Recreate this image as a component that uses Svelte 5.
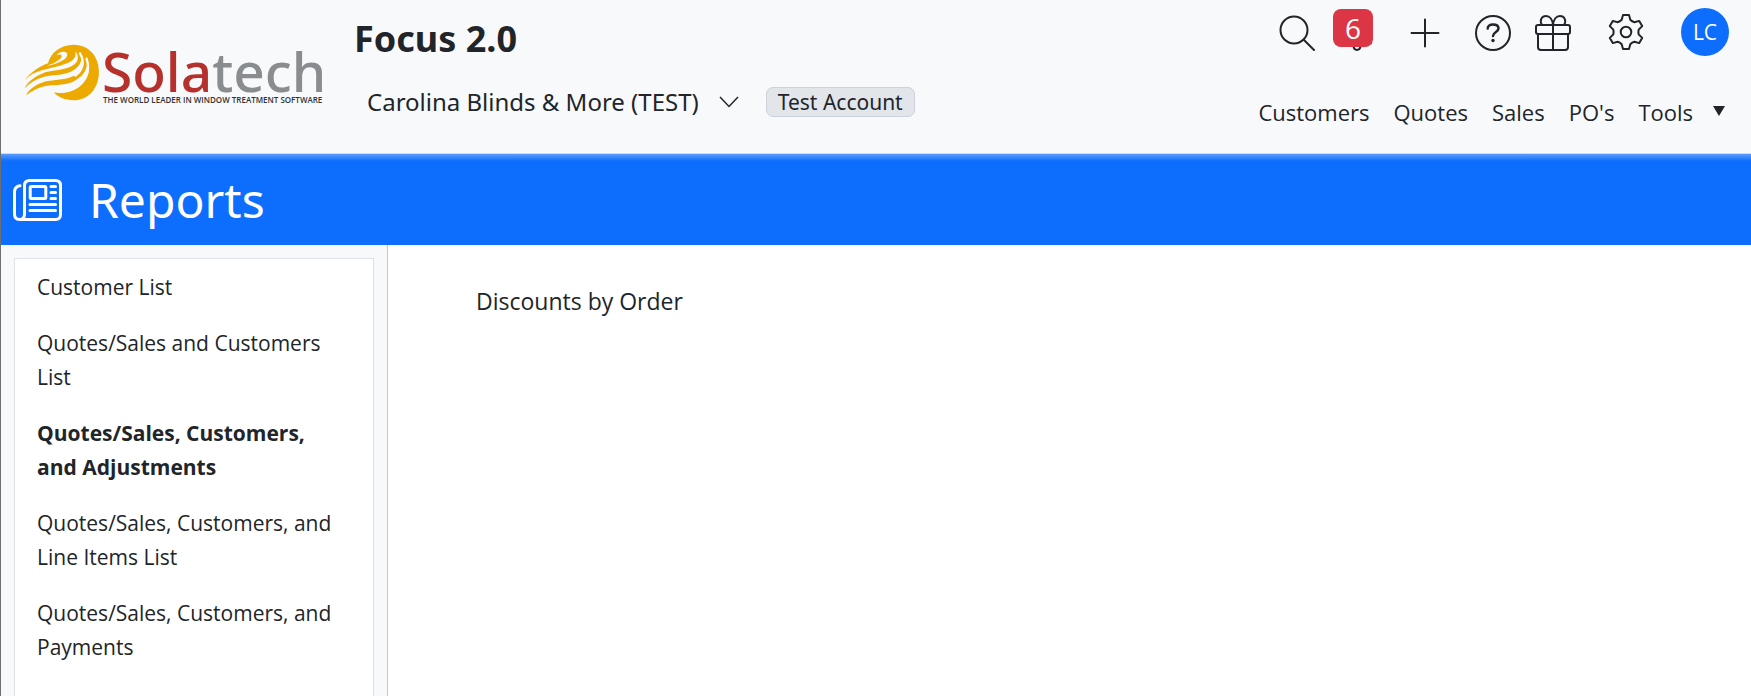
<script>
    const company = "Carolina Blinds & More (TEST)";
    const menu = ["Customers", "Quotes", "Sales", "PO's"];
    const reports = [
        "Customer List",
        "Quotes/Sales and Customers List",
        "Quotes/Sales, Customers, and Adjustments",
        "Quotes/Sales, Customers, and Line Items List",
        "Quotes/Sales, Customers, and Payments"
    ];

    let notifications = 6;
    let activeReport = 2;
</script>

<div class="page">
    <header>
        <a class="logo" href="#home" aria-label="Solatech home">
            <svg viewBox="0 -24 304 96" width="304" height="96">
                <g transform="translate(-3 -2) scale(0.333)">
                    <path fill="#ecaa00" d="M8 115C25 92 50 74 78 64C85 33 115 8 155 8C200 8 231 42 231 90C231 138 200 175 155 175C128 175 108 165 95 152C120 156 152 152 175 132C197 113 208 85 196 52C198 85 182 106 152 120C122 132 92 127 68 133C45 138 28 148 12 161C22 140 42 127 72 118C105 112 137 114 160 99C182 84 190 60 176 34C184 60 170 78 145 90C115 102 90 97 64 105C40 112 22 124 8 139C16 120 40 102 70 91C100 83 130 84 150 72C170 60 173 44 160 28C164 44 155 56 135 64C105 76 85 78 60 85C38 91 20 101 8 115Z" />
                    <path fill="#f8f9fb" d="M74 72C98 63 120 52 119 42C117 36 110 37 104 40C110 28 132 25 136 35C139 50 112 64 74 72Z" />
                    <path fill="none" stroke="#f8f9fb" stroke-width="7" stroke-linecap="round" d="M174 34C190 60 182 84 160 101M194 50C205 85 194 112 168 132" />
                </g>
                <text class="name" x="77" y="48"><tspan fill="#b6302c">Sola</tspan><tspan fill="#8a8d90">tech</tspan></text>
                <text class="tagline" x="78" y="59">THE WORLD LEADER IN WINDOW TREATMENT SOFTWARE</text>
            </svg>
        </a>

        <div class="account">
            <h1>Focus 2.0</h1>
            <div class="company">
                <button class="picker">
                    {company}
                    <svg class="chevron" viewBox="0 0 20 12" width="20" height="12"><path d="M1 1L10 10.500L19 1" /></svg>
                </button>
                <span class="tag">Test Account</span>
            </div>
        </div>

        <div class="tools">
            <div class="icons">
                <div class="pair">
                    <button aria-label="Search">
                        <svg viewBox="0 0 36 36"><circle cx="15" cy="15" r="13.500" /><path d="M24.500 24.500L35 35" /></svg>
                    </button>
                    <button class="bell" aria-label="Notifications">
                        <svg viewBox="0 0 36 36"><path d="M18 3C11 4 9.500 9 9.500 14C9.500 21 7 26 4 28H32C29 26 26.500 21 26.500 14C26.500 9 25 4 18 3ZM14.500 31.500C15 36 21 36 21.500 31.500" /></svg>
                        <span class="badge">{notifications}</span>
                    </button>
                </div>
                <button aria-label="Add">
                    <svg viewBox="0 0 36 36"><path d="M18 4.500V31.500M4.500 18H31.500" /></svg>
                </button>
                <div class="pair">
                    <button aria-label="Help">
                        <svg viewBox="0 0 36 36"><circle cx="18" cy="18" r="17" /><path class="mark" d="M12.700 13.500C12.700 11 15 9.500 18 9.500C21.200 9.500 23.500 11 23.500 13.600C23.500 17 18 17 18 21" /><circle class="dot" cx="18" cy="25.500" r="1.700" /></svg>
                    </button>
                    <button aria-label="What's new">
                        <svg viewBox="0 0 36 36"><rect x="1" y="10" width="34" height="9" rx="2" /><path d="M3 19V32Q3 35 6 35H30Q33 35 33 32V19M18 10V35M7 10C4 5 7 1 11 1C15 1 17.500 5 18 10C18.500 5 21 1 25 1C29 1 32 5 29 10" /></svg>
                    </button>
                </div>
            </div>
            <button aria-label="Settings">
                <svg viewBox="0 0 36 36"><circle cx="18" cy="18" r="5.300" /><path d="M15 1H21L22.300 5.800Q24 7.600 26.400 8.200L31.200 6.900L34.200 12.100L30.700 15.600Q30 18 30.700 20.400L34.200 23.900L31.200 29.100L26.400 27.800Q24 28.400 22.300 30.200L21 35H15L13.700 30.200Q12 28.400 9.600 27.800L4.800 29.100L1.800 23.900L5.300 20.400Q6 18 5.300 15.600L1.800 12.100L4.800 6.900L9.600 8.200Q12 7.600 13.700 5.800Z" /></svg>
            </button>
            <button class="avatar" aria-label="Account LC">LC</button>

            <nav>
                {#each menu as item}
                    <a href="#{item.replace(/\W/g, '').toLowerCase()}">{item}</a>
                {/each}
                <a class="dropdown" href="#tools">
                    Tools
                    <svg viewBox="0 0 12 10" width="12" height="10"><path d="M0 0h12L6 10z" /></svg>
                </a>
            </nav>
        </div>
    </header>

    <div class="banner">
        <svg viewBox="0 0 49 42" width="49" height="42">
            <path d="M6.500 40.500Q11.500 40.500 11.500 35V6.500Q11.500 1.500 16.500 1.500H42.500Q47.500 1.500 47.500 6.500V35.500Q47.500 40.500 42.500 40.500H6.500Q1.500 40.500 1.500 35V13Q1.500 7.500 7 6.700" />
            <rect x="17.200" y="7.500" width="15.600" height="12" rx="1" />
            <path d="M38 7.500H42.500M38 13.500H42.500M38 19.500H42.500M17 25.500H42.500M17 31.500H42.500" />
        </svg>
        <h2>Reports</h2>
    </div>

    <div class="content">
        <aside>
            <ul>
                {#each reports as report, index}
                    <li>
                        <a href="#report-{index}"
                            class:isActive={index === activeReport}
                            on:click={() => activeReport = index}>
                            {report}
                        </a>
                    </li>
                {/each}
            </ul>
        </aside>
        <main>
            <a href="#discounts-by-order">Discounts by Order</a>
        </main>
    </div>
</div>

<style>
    :global(body) {
        margin: 0;
        background: #fff;
    }

    .page {
        box-sizing: border-box;
        display: flex;
        flex-direction: column;
        min-height: 100vh;
        border-left: 1px solid #6c6e72;
        color: #212529;
        font-family: "Open Sans", "Noto Sans", sans-serif;
        font-size: 21px;
        line-height: 34px;
    }

    a {
        color: inherit;
        text-decoration: none;
    }

    button {
        padding: 0;
        border: 0;
        background: none;
        color: inherit;
        font: inherit;
        cursor: pointer;
    }

    svg {
        display: block;
    }

    h1, h2 {
        margin: 0;
    }

    header {
        display: flex;
        align-items: flex-start;
        box-sizing: border-box;
        height: 154px;
        border-bottom: 1px solid #d5d9de;
        background: #f8f9fb;
    }

    .logo {
        padding: 20px 0 0 24px;
    }

    .name {
        font-family: "Noto Sans", sans-serif;
        font-size: 55px;
        font-weight: 500;
    }

    .tagline {
        fill: #333;
        font-family: "Open Sans", sans-serif;
        font-size: 8px;
        font-weight: 600;
    }

    .account {
        flex: 1;
        padding: 15px 0 0 25px;
        font-family: "Noto Sans", sans-serif;
    }

    h1 {
        font-size: 36px;
        line-height: 48px;
    }

    .company {
        display: flex;
        align-items: center;
        gap: 27px;
        padding: 22px 0 0 13px;
    }

    .picker {
        display: flex;
        align-items: center;
        gap: 20px;
        font-size: 24px;
    }

    .chevron path {
        fill: none;
        stroke: #212529;
        stroke-width: 1.5;
    }

    .tag {
        padding: 0 11px;
        border: 1px solid #ccd2dc;
        border-radius: 7px;
        background: #e2e5e9;
        font-size: 21px;
        line-height: 28px;
    }

    .tools {
        display: flex;
        flex-wrap: wrap;
        align-items: center;
        justify-content: flex-end;
        gap: 39px 37px;
        width: 500px;
        padding: 8px 22px 0 0;
    }

    .icons {
        display: flex;
        gap: 32px;
        padding-top: 2px;
    }

    .pair {
        display: flex;
        gap: 24px;
    }

    .tools button svg {
        width: 36px;
        height: 36px;
        fill: none;
        stroke: currentColor;
        stroke-width: 2;
        stroke-linecap: round;
        stroke-linejoin: round;
    }

    .tools .mark {
        stroke-width: 2.5;
    }

    .tools .dot {
        fill: currentColor;
        stroke: none;
    }

    .bell {
        position: relative;
    }

    .badge {
        position: absolute;
        top: -6px;
        left: -6px;
        width: 40px;
        border-radius: 8px;
        background: #dc3545;
        color: #fff;
        font-size: 28px;
        line-height: 38px;
    }

    .avatar {
        width: 48px;
        height: 48px;
        border-radius: 50%;
        background: #0d6efd;
        color: #fff;
    }

    nav {
        display: flex;
        gap: 24px;
        font-size: 22px;
    }

    .dropdown {
        display: flex;
        gap: 20px;
        padding-right: 4px;
    }

    .dropdown svg {
        margin-top: 11px;
        fill: currentColor;
    }

    .banner {
        display: flex;
        align-items: center;
        gap: 27px;
        height: 91px;
        padding: 0 12px;
        background: linear-gradient(#5c9cfb, #0d6efd 7px);
        color: #fff;
    }

    .banner svg {
        fill: none;
        stroke: currentColor;
        stroke-width: 3;
        stroke-linecap: round;
    }

    h2 {
        font-family: "Noto Sans", sans-serif;
        font-size: 48px;
        font-weight: 400;
    }

    .content {
        display: flex;
        flex: 1;
    }

    aside {
        display: flex;
        box-sizing: border-box;
        width: 387px;
        padding: 13px 13px 0;
        border-right: 1px solid #c8c9cb;
        background: #f8f9fb;
    }

    ul {
        flex: 1;
        margin: 0;
        padding: 11px 32px 22px 22px;
        border: 1px solid #dee2e6;
        border-bottom: 0;
        background: #fff;
        list-style: none;
    }

    li + li {
        margin-top: 22px;
    }

    .isActive {
        font-weight: 700;
    }

    main {
        padding: 39px 88px;
        font-size: 23px;
    }
</style>
